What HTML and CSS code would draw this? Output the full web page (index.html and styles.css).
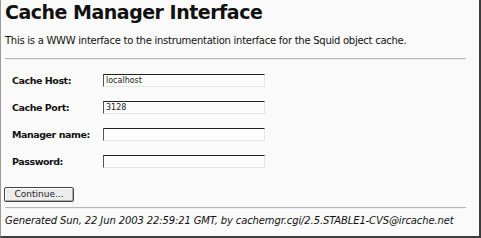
FILE: index.html
```html
<!DOCTYPE html>
<html>
<head>
<meta charset="utf-8">
<title>Cache Manager Interface</title>
<link rel="stylesheet" href="styles.css">
</head>
<body>
<div class="frame">
  <h1 class="title">Cache Manager Interface</h1>
  <p class="intro">This is a WWW interface to the instrumentation interface for the Squid object cache.</p>
  <hr class="rule">
  <form class="form">
    <div class="row"><span class="label">Cache Host:</span><span class="field">localhost</span></div>
    <div class="row"><span class="label">Cache Port:</span><span class="field">3128</span></div>
    <div class="row"><span class="label">Manager name:</span><span class="field"></span></div>
    <div class="row"><span class="label">Password:</span><span class="field"></span></div>
    <div class="actions"><span class="button">Continue...</span></div>
  </form>
  <hr class="rule rule-bottom">
  <p class="footer">Generated Sun, 22 Jun 2003 22:59:21 GMT, by cachemgr.cgi/2.5.STABLE1-CVS@ircache.net</p>
</div>
</body>
</html>
```
FILE: styles.css
```css
html, body {
  margin: 0;
  padding: 0;
  background: #fafafa;
}
.frame {
  box-sizing: border-box;
  width: 481px;
  height: 238px;
  border-left: 1px solid #9a9a9a;
  border-right: 2px solid #3c3c3c;
  border-bottom: 2px solid #3c3c3c;
  padding: 0 0 0 4px;
  font-family: "DejaVu Sans", sans-serif;
  font-size: 10px;
  color: #111;
  overflow: hidden;
}
.title {
  margin: 0;
  font-size: 19px;
  letter-spacing: -0.5px;
  line-height: 24px;
  font-weight: bold;
  color: #111;
}
.intro {
  margin: 10px 0 0 0;
  font-size: 10px;
  letter-spacing: -0.26px;
  line-height: 13px;
}
.rule {
  margin: 11px 0 0 0;
  width: 461px;
  height: 0;
  border: 0;
  border-top: 1px solid #b8b8b8;
  border-bottom: 1px solid #f0f0f0;
}
.form {
  margin: 14px 0 0 7px;
  display: flex;
  flex-direction: column;
  gap: 14px;
}
.row {
  display: flex;
  align-items: center;
  height: 13px;
}
.label {
  width: 91px;
  font-size: 9.5px;
  letter-spacing: -0.45px;
  font-weight: bold;
}
.field {
  box-sizing: border-box;
  width: 162px;
  height: 13px;
  border-top: 1px solid #222;
  border-left: 1px solid #555;
  border-right: 1px solid #e6e6e6;
  border-bottom: 1px solid #e6e6e6;
  background: #fcfcfc;
  font-size: 8px;
  line-height: 11px;
  padding-left: 2px;
  color: #222;
}
.actions {
  display: flex;
  margin: 5px 0 0 -8px;
}
.button {
  display: block;
  box-sizing: border-box;
  width: 70px;
  height: 15px;
  border: 1px solid #444;
  border-radius: 2px;
  background: #ececec;
  box-shadow: inset 1px 1px 0 #fff, inset -1px -1px 0 #aaa;
  font-size: 9px;
  line-height: 13px;
  text-align: center;
  color: #222;
}
.rule-bottom {
  margin-top: 5px;
}
.footer {
  margin: 5px 0 0 0;
  font-size: 10px;
  letter-spacing: -0.12px;
  font-style: italic;
  line-height: 13px;
}
```
